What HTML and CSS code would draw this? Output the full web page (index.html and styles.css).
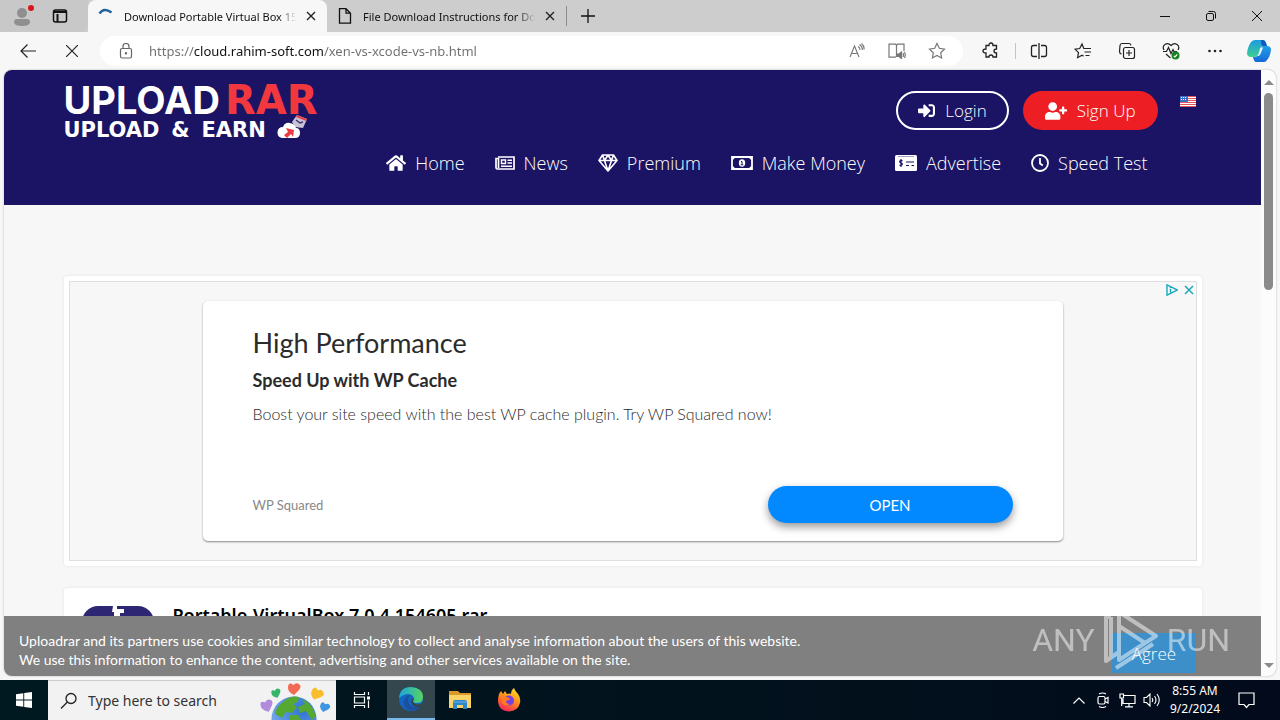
FILE: index.html
```html
<!DOCTYPE html>
<html lang="en">
<head>
<meta charset="utf-8">
<meta name="viewport" content="width=device-width, initial-scale=1">
<title>Download Portable Virtual Box</title>
<link rel="stylesheet" href="styles.css">
</head>
<body>
<header class="tabstrip">
  <div class="tabstrip-start">
    <button class="icon-btn" aria-label="Profile">
      <svg width="24" height="24" viewBox="0 0 24 24"><circle cx="12" cy="9" r="5" fill="#8f8f8f"/><path d="M4 18q0-3 3-3h10q3 0 3 3 0 4-8 4t-8-4z" fill="#8f8f8f"/><circle cx="21" cy="4" r="3" fill="#d8161c"/></svg>
    </button>
    <button class="icon-btn" aria-label="Tab actions">
      <svg width="16" height="16" viewBox="0 0 16 16" fill="none" stroke="#111" stroke-width="1.5"><rect x="1.5" y="2" width="13" height="12" rx="2"/><path d="M2 4h12M5.5 6v8" stroke-width="2"/></svg>
    </button>
  </div>
  <div class="tab tab-active">
    <svg width="16" height="16" viewBox="0 0 16 16" fill="none" stroke="#1f639c" stroke-width="2.500"><path d="M1.500 5.500Q6-1 13.500 4.500"/></svg>
    <span class="tab-title">Download Portable Virtual Box 15</span>
    <button class="tab-close" aria-label="Close tab"><svg width="10" height="10" viewBox="0 0 10 10" stroke="#222" stroke-width="1.400"><path d="M1 1l8 8M9 1L1 9"/></svg></button>
  </div>
  <div class="tab">
    <svg width="16" height="16" viewBox="0 0 16 16" fill="none" stroke="#111" stroke-width="1.300"><path d="M2.500.7h6.500l4.500 4.500v10h-11zM9 .7v4.500h4.500"/></svg>
    <span class="tab-title">File Download Instructions for Dow</span>
    <button class="tab-close" aria-label="Close tab"><svg width="10" height="10" viewBox="0 0 10 10" stroke="#222" stroke-width="1.400"><path d="M1 1l8 8M9 1L1 9"/></svg></button>
  </div>
  <span class="tab-sep"></span>
  <button class="icon-btn new-tab" aria-label="New tab"><svg width="14" height="14" viewBox="0 0 14 14" stroke="#111" stroke-width="1.300"><path d="M7 0v14M0 7h14"/></svg></button>
  <div class="window-controls">
    <button class="icon-btn" aria-label="Minimize"><svg width="10" height="10" viewBox="0 0 10 10" stroke="#111"><path d="M0 5.500h10"/></svg></button>
    <button class="icon-btn" aria-label="Restore"><svg width="10" height="10" viewBox="0 0 10 10" fill="none" stroke="#111"><rect x=".5" y="2.500" width="7" height="7" rx="1.500"/><path d="M2.500.5h5q2 0 2 2v5"/></svg></button>
    <button class="icon-btn" aria-label="Close"><svg width="10" height="10" viewBox="0 0 10 10" stroke="#111"><path d="M0 0l10 10M10 0L0 10"/></svg></button>
  </div>
</header>

<div class="toolbar">
  <button class="icon-btn nav-btn" aria-label="Back"><svg width="16" height="14" viewBox="0 0 16 14" fill="none" stroke="#222" stroke-width="1.200"><path d="M16 7H1M7.500.5L1 7l6.500 6.500"/></svg></button>
  <button class="icon-btn nav-btn" aria-label="Stop"><svg width="12" height="12" viewBox="0 0 12 12" stroke="#222" stroke-width="1.200"><path d="M0 0l12 12M12 0L0 12"/></svg></button>
  <div class="address">
    <svg width="14" height="16" viewBox="0 0 14 16" fill="none" stroke="#666" stroke-width="1.200"><rect x="1.500" y="5.500" width="11" height="9.500" rx="1.500"/><path d="M4 5.500V3.500a3 3 0 0 1 6 0v2"/><circle cx="7" cy="10.300" r=".6" fill="#666"/></svg>
    <input class="url" type="text" aria-label="Address" value="https://cloud.rahim-soft.com/xen-vs-xcode-vs-nb.html">
    <button class="icon-btn addr-btn" aria-label="Read aloud"><svg width="16" height="16" viewBox="0 0 16 16" fill="none" stroke="#777" stroke-width="1.100"><path d="M1 14L5.500 3 10 14M2.500 10.500h6M9 3.500q2 1 2 3.500M10.500 1.500q3 2 3 5.500M12.500.5q3 2.500 2.500 6"/></svg></button>
    <button class="icon-btn addr-btn" aria-label="Immersive reader"><svg width="18" height="16" viewBox="0 0 18 16" fill="none" stroke="#777" stroke-width="1.200"><path d="M8.500 1v13M8.500 2l-1-.8H1v13h7M8.500 2l1-.8H16v7"/><path d="M9 11h2l2.500-2v6.500L11 13.500H9z" fill="#777"/><path d="M15 10q1 2 0 4M16.500 9q1.500 3 0 6"/></svg></button>
    <button class="icon-btn addr-btn" aria-label="Favorite"><svg width="18" height="18" viewBox="0 0 18 18" fill="none" stroke="#777" stroke-width="1.200"><path d="M9 1.500l2.300 4.800 5.200.8-3.800 3.700.9 5.200L9 13.500 4.400 16l.9-5.200L1.500 7.100l5.200-.8z"/></svg></button>
  </div>
  <div class="tools">
    <button class="icon-btn tool" aria-label="Extensions"><svg width="18" height="18" viewBox="0 0 18 18" fill="none" stroke="#222" stroke-width="1.300"><path d="M4 3.500h3q0-2.500 2-2.500t2 2.500h3.500V7q-2.500 0-2.500 2t2.500 2v4H11q0-2-2-2t-2 2H4v-4q-3 0-3-2t3-2z"/></svg></button>
    <span class="tool-sep"></span>
    <button class="icon-btn tool" aria-label="Split screen"><svg width="18" height="18" viewBox="0 0 18 18" fill="none" stroke="#222" stroke-width="1.300"><path d="M7 3.500H3.500q-2 0-2 2v7q0 2 2 2H7M11 3.500h3.500q2 0 2 2v7q0 2-2 2H11M9 1v16"/></svg></button>
    <button class="icon-btn tool" aria-label="Favorites"><svg width="18" height="18" viewBox="0 0 18 18" fill="none" stroke="#222" stroke-width="1.200"><path d="M10 7L8 2 5.700 6.500l-4.700.7 3.500 3.500-.9 5L8 13.300l1.500.8M10 6.500h7M10.500 10h6.500M11.500 13.500h4"/></svg></button>
    <button class="icon-btn tool" aria-label="Collections"><svg width="18" height="18" viewBox="0 0 18 18" fill="none" stroke="#222" stroke-width="1.200"><rect x="5.500" y="5.500" width="11" height="11" rx="2"/><path d="M11 8v6M8 11h6M3.500 12Q1.500 11.500 1.500 9.500l.5-6Q2.200 1.500 4 1.500h7q1.500 0 2 1.800"/></svg></button>
    <button class="icon-btn tool" aria-label="Browser essentials"><svg width="18" height="18" viewBox="0 0 18 18" fill="none" stroke="#222" stroke-width="1.200"><path d="M2 8Q0 4.500 3 2.500t6 1q3-3 6-1T16 8M1 9.500h3.500l2-4 2.500 6 2-4 1 2h3M4 12l4.500 4"/><circle cx="13.500" cy="13.500" r="4" fill="#16831f" stroke="none"/><path d="M11.800 14l1.200 1 2.300-2.600" stroke="#fff"/></svg></button>
    <button class="icon-btn tool" aria-label="Settings and more"><svg width="14" height="4" viewBox="0 0 14 4" fill="#222"><circle cx="1.500" cy="2" r="1.300"/><circle cx="7" cy="2" r="1.300"/><circle cx="12.500" cy="2" r="1.300"/></svg></button>
    <button class="icon-btn tool tool-copilot" aria-label="Copilot"><svg width="24" height="24" viewBox="0 0 24 24"><defs><linearGradient id="cpa" x1="0" y1="0" x2="0" y2="1"><stop offset="0" stop-color="#1a9be0"/><stop offset="1" stop-color="#3fcf93"/></linearGradient><linearGradient id="cpb" x1="0" y1="0" x2="0" y2="1"><stop offset="0" stop-color="#1f9fe8"/><stop offset="1" stop-color="#1769d8"/></linearGradient></defs><path d="M8 1h8q2 0 3 3l1 3h-4q-2 0-3 3l-2 6q-1 2-4 2H4q-4 0-4-4Q1 7 4 3q2-2 4-2z" fill="url(#cpa)"/><path d="M16 7h4q4 0 4 4-1 7-4 10-1 2-3 2H9q-2 0-3-5h2q2 0 3-2l2-6q1-3 3-3z" fill="url(#cpb)"/><path d="M14 1h2q2 0 3 3l1 3h-4q-2 0-2-6z" fill="#1558c0"/><path d="M13.500 8.500H16l-2.500 6.500q-1 2-2.500 2H9.500q1.500 0 2-2z" fill="#e9f7ff"/></svg></button>
  </div>
</div>

<div class="viewport">
  <div class="page">
    <header class="site-header">
      <div class="container">
        <div class="header-top">
          <a class="logo" href="#" aria-label="UploadRAR home">
            <span class="logo-main"><span>UPLOAD</span><span class="logo-rar">RAR</span></span>
            <span class="logo-sub"><span>UPLOAD</span><span>&amp;</span><span>EARN</span>
              <svg width="30" height="24" viewBox="0 3 30 24"><path d="M15 7l5-7 10 4-4 9-8-1z" fill="#c9c3d4"/><path d="M20 0l10 4-1 2-10-4z" fill="#e8434b"/><path d="M19 5l4 3 3-1" fill="none" stroke="#3a3478" stroke-width="1.500"/><path d="M5 23q-5-1-4.500-6T6 12q2-5 7-4t6 5q4 0 4 5t-5 5z" fill="#fff"/><path d="M9 13l8 2-1 7-2-3-4 4-3-3 4-3z" fill="#ec3a42"/></svg>
            </span>
          </a>
          <div class="account">
            <button class="pill pill-outline"><svg width="17" height="17" viewBox="0 0 512 512" fill="currentColor"><path d="M416 448h-84c-6.600 0-12-5.400-12-12v-40c0-6.600 5.400-12 12-12h84c17.700 0 32-14.300 32-32V160c0-17.700-14.300-32-32-32h-84c-6.600 0-12-5.400-12-12V76c0-6.600 5.400-12 12-12h84c53 0 96 43 96 96v192c0 53-43 96-96 96zm-47-201L201 79c-15-15-41-4.500-41 17v96H24c-13.300 0-24 10.700-24 24v96c0 13.300 10.700 24 24 24h136v96c0 21.500 26 32 41 17l168-168c9.300-9.400 9.300-24.600 0-34z"/></svg>Login</button>
            <button class="pill pill-red"><svg width="22" height="18" viewBox="0 0 640 512" fill="currentColor"><path d="M624 208h-64v-64c0-8.800-7.200-16-16-16h-32c-8.800 0-16 7.200-16 16v64h-64c-8.800 0-16 7.200-16 16v32c0 8.800 7.200 16 16 16h64v64c0 8.800 7.200 16 16 16h32c8.800 0 16-7.200 16-16v-64h64c8.800 0 16-7.200 16-16v-32c0-8.800-7.200-16-16-16zm-400 48c70.700 0 128-57.300 128-128S294.700 0 224 0 96 57.300 96 128s57.300 128 128 128zm89.600 32h-16.700c-22.200 10.200-46.900 16-72.900 16s-50.600-5.800-72.900-16h-16.700C60.200 288 0 348.200 0 422.400V464c0 26.500 21.500 48 48 48h352c26.500 0 48-21.500 48-48v-41.600c0-74.200-60.200-134.400-134.400-134.400z"/></svg>Sign Up</button>
            <button class="flag" aria-label="English"><svg width="16" height="11" viewBox="0 0 16 11"><path fill="#fff" d="M0 0h16v11H0z"/><path d="M0 .5h16M0 2.500h16M0 4.500h16M0 6.500h16M0 8.500h16M0 10.500h16" stroke="#e0555c"/><path fill="#3d6fc9" d="M0 0h8v6H0z"/><path d="M1 1.500h6M1 3.500h6" stroke="#fff" stroke-dasharray="1 1"/></svg></button>
          </div>
        </div>
        <nav class="site-nav">
          <a href="#"><svg width="20" height="18" viewBox="0 0 576 512" fill="currentColor"><path d="M280.370 148.260L96 300.110V464a16 16 0 0 0 16 16l112.060-.29a16 16 0 0 0 15.920-16V368a16 16 0 0 1 16-16h64a16 16 0 0 1 16 16v95.640a16 16 0 0 0 16 16.050L464 480a16 16 0 0 0 16-16V300L295.670 148.260a12.190 12.190 0 0 0-15.300 0zM571.600 251.470L488 182.560V44.050a12 12 0 0 0-12-12h-56a12 12 0 0 0-12 12v72.610L318.470 43a48 48 0 0 0-61 0L4.340 251.470a12 12 0 0 0-1.600 16.900l25.500 31A12 12 0 0 0 45.150 301l235.220-193.740a12.190 12.190 0 0 1 15.300 0L530.900 301a12 12 0 0 0 16.900-1.600l25.500-31a12 12 0 0 0-1.700-16.930z"/></svg>Home</a>
          <a href="#"><svg width="20" height="14" viewBox="0 0 20 14" fill="none" stroke="currentColor" stroke-width="1.700"><path d="M3 1h16v12H2.500Q1 13 1 11.500V2.500h2M3.500 2v10"/><path d="M6.500 4h4v3.500h-4zM12.500 4.200H17M12.500 7H17M6 10.200h11" stroke-width="1.400"/></svg>News</a>
          <a href="#"><svg width="20" height="18" viewBox="0 0 20 18" fill="none" stroke="currentColor" stroke-width="1.600" stroke-linejoin="round"><path d="M4.500 1h11L19 6.500 10 17 1 6.500zM1 6.500h18M4.500 1L6.500 6.500 10 17l3.500-10.500 2-5.500M6.500 6.500L10 1l3.500 5.500"/></svg>Premium</a>
          <a href="#"><svg width="22" height="14" viewBox="0 0 22 14" fill="none" stroke="currentColor" stroke-width="1.800"><path d="M1 1h20v12H1z"/><path d="M1 3q2 0 2-2M19 1q0 2 2 2M1 11q2 0 2 2M19 13q0-2 2-2" stroke-width="1.400"/><ellipse cx="11" cy="7" rx="3.200" ry="3.700" fill="currentColor" stroke="none"/><path d="M10 5.500h1v3M9.700 8.800h2.600" stroke="#1b1464" stroke-width="1"/></svg>Make Money</a>
          <a href="#"><svg width="22" height="17" viewBox="0 0 22 17"><rect y="0" width="22" height="16" rx="1.500" fill="currentColor"/><path d="M11 7h8M11 10.500h3M16.500 10.500H19M7.500 5.700H5.800q-1.400.2-1 1.500l2.300 1.300q.5 1.700-1 1.900H4.500M6 4v8" fill="none" stroke="#1b1464" stroke-width="1.200"/><path d="M3 1.500h16" stroke="#1b1464" stroke-width=".4"/></svg>Advertise</a>
          <a href="#"><svg width="18" height="18" viewBox="0 0 18 18" fill="none" stroke="currentColor" stroke-width="1.800"><circle cx="9" cy="9" r="8"/><path d="M9 4v5.500l2.800 2"/></svg>Speed Test</a>
        </nav>
      </div>
    </header>

    <main class="container content">
      <section class="panel ad-panel">
        <div class="ad-frame">
          <div class="ad-choices">
            <a href="#" aria-label="AdChoices"><svg width="12" height="12" viewBox="0 0 12 12" fill="none" stroke="#1aa9bc" stroke-width="1.400"><path d="M1 .8L11.500 6 1 11.200zM4.500 5v3.500M4.500 3.200v1"/></svg></a>
            <button aria-label="Close ad"><svg width="10" height="10" viewBox="0 0 10 10" stroke="#1aa9bc" stroke-width="1.500"><path d="M1 1l8 8M9 1L1 9"/></svg></button>
          </div>
          <article class="ad-card">
            <h2>High Performance</h2>
            <h3>Speed Up with WP Cache</h3>
            <p>Boost your site speed with the best WP cache plugin. Try WP Squared now!</p>
            <div class="ad-foot"><span>WP Squared</span><button class="ad-open">OPEN</button></div>
          </article>
        </div>
      </section>
      <section class="panel file-panel">
        <svg width="72" height="72" viewBox="0 0 72 72"><rect width="72" height="72" rx="16" fill="#2d2673"/><path d="M31 0h4v3h7v4h-4v6h-6V6h-2z" fill="#fff"/></svg>
        <h1>Portable-VirtualBox 7.0.4.154605.rar</h1>
      </section>
    </main>

    <div class="cookie-bar">
      <p>Uploadrar and its partners use cookies and similar technology to collect and analyse information about the users of this website.<br>We use this information to enhance the content, advertising and other services available on the site.</p>
      <button class="agree">Agree</button>
    </div>
    <div class="watermark" aria-hidden="true">
      <span>ANY</span>
      <svg width="56" height="64" viewBox="0 0 56 64" fill="none" stroke="#fff" stroke-width="4" stroke-linejoin="round"><path d="M8 9H3v44l13-9V4L53 28 42 35 16 18M16 44v8l26-17M16 18l0 26M13 60l37-24M8 9v40"/></svg>
      <span>RUN</span>
    </div>
  </div>
  <div class="scrollbar" aria-hidden="true"><span class="arrow-up"></span><span class="thumb"></span><span class="arrow-down"></span></div>
</div>

<footer class="taskbar">
  <button class="task start" aria-label="Start"><svg width="16" height="16" viewBox="0 0 16 16" fill="#fff"><path d="M0 2.200L7.300 1.200V7.500H0zM8.200 1.100L16 0V7.500H8.200zM0 8.400h7.300v6.400L0 13.800zM8.200 8.400H16V16l-7.800-1.100z"/></svg></button>
  <label class="search">
    <svg width="18" height="18" viewBox="0 0 18 18" fill="none" stroke="#222" stroke-width="1.300"><circle cx="11" cy="6.500" r="5"/><path d="M7.400 10L1 16.500"/></svg>
    <input type="text" aria-label="Search" placeholder="Type here to search">
    <svg class="globe" width="72" height="38" viewBox="0 0 72 38"><defs><radialGradient id="gl" cx=".7" cy=".3" r=".8"><stop offset="0" stop-color="#2f74d0"/><stop offset="1" stop-color="#78a9ef"/></radialGradient><path id="h" d="M0 3Q0-2 3-1.500L5.500 0Q8-3 11-1T11 5L6 10Q0 7 0 3z"/></defs><circle cx="35" cy="37" r="22.500" fill="url(#gl)"/><path d="M24 20q8-7 16-5l-1 5-5 2 4 3-5 6-6-1-4 6-7-4q1-7 8-12zM43 17q10 4 14 17l-4 4-6-9-6 2-2-6 7-3zM31 33l8 0 3 5H30z" fill="#55a830"/><use href="#h" transform="translate(29 3)" fill="#f26a55"/><use href="#h" transform="translate(12 10) scale(.75) rotate(-18)" fill="#34b56a"/><use href="#h" transform="translate(54 6) rotate(26)" fill="#f7bd2d"/><use href="#h" transform="translate(1 22) rotate(-18)" fill="#b28bdc"/><use href="#h" transform="translate(62 21) scale(.8) rotate(18)" fill="#3e95e0"/></svg>
  </label>
  <button class="task task-view" aria-label="Task view"><svg width="18" height="16" viewBox="0 0 18 16" fill="none" stroke="#fff" stroke-width="1.200"><path d="M1.500 0v2.500h10V0M1.500 5h10v6h-10zM1.500 16v-2.500h10V16M15.500 0v3M15.500 8.500V16"/><path d="M14 4.500h3v3h-3z" fill="#fff" stroke="none"/></svg></button>
  <button class="task task-active" aria-label="Microsoft Edge"><svg width="24" height="24" viewBox="0 0 24 24"><defs><linearGradient id="ea" x1="0" y1="0" x2="1" y2="0"><stop offset="0" stop-color="#1ca4df"/><stop offset="1" stop-color="#57d45e"/></linearGradient></defs><circle cx="12" cy="12" r="12" fill="#1266bf"/><path d="M0 11Q1 0 12 0q12 1 12 10 0 6-6 6-4 0-4-2 2-2 0-5Q9 4 0 11z" fill="url(#ea)"/><path d="M9 12q0 8 8 8 3 0 5-1-5 6-12 4Q4 20 5 14q1-5 6-6-2 2-2 4z" fill="#1b4fa0"/><path d="M14 14q0 3 5 3.500 3 0 5-2v2l-2 2.500q-9 1-10-5 0-3 2-4 1 1 0 3z" fill="#34474f"/></svg></button>
  <button class="task" aria-label="File Explorer"><svg width="22" height="20" viewBox="0 0 22 20"><path d="M0 1h9l2 2h11v15H0z" fill="#d79a2b"/><path d="M0 5h22v13H0z" fill="#fbd468"/><path d="M4 19v-7q0-2 2-2h10q2 0 2 2v7h-4v-4H8v4z" fill="#2f86c8"/><path d="M4 12h14" stroke="#69b3e8"/></svg></button>
  <button class="task" aria-label="Firefox"><svg width="24" height="24" viewBox="0 0 24 24"><defs><linearGradient id="ff" x1=".8" y1="0" x2=".3" y2="1"><stop offset="0" stop-color="#ffe226"/><stop offset=".5" stop-color="#ff8a1c"/><stop offset="1" stop-color="#f5225f"/></linearGradient></defs><path d="M2 6l2-3 2 3 2-3 2 3q3-1 4 0 0-4 3-6 1 3 4 6 3 4 2 9-2 8-11 8.500Q2 23 1 14q0-5 1-8z" fill="url(#ff)"/><circle cx="12" cy="12.500" r="5" fill="#7a3fe0"/><path d="M5 10q4-2 7 0 2 1 0 2l-3 1q0 3 4 3-5 3-8-1z" fill="#ff7b22"/></svg></button>
  <div class="tray">
    <span class="tray-icon"><svg width="12" height="7" viewBox="0 0 12 7" fill="none" stroke="#fff" stroke-width="1.200"><path d="M.5 6.500l5.500-5.500 5.500 5.500"/></svg></span>
    <span class="tray-icon"><svg width="12" height="16" viewBox="0 0 12 16" fill="none" stroke="#fff" stroke-width="1.200"><rect x="1" y="4.500" width="7" height="7.500" rx="1.500"/><path d="M8 7l3-1.500V11L8 9.500M2 2q3.500-2 7 0M2 14.500q3.500 2 7 0"/></svg></span>
    <span class="tray-icon"><svg width="17" height="15" viewBox="0 0 17 15" fill="none" stroke="#fff" stroke-width="1.200"><path d="M5 2.500h11v8H4V6M10 10.500v3M6 13.800h8M1 1h3.500v4H1zM2.700 5v8"/></svg></span>
    <span class="tray-icon"><svg width="17" height="14" viewBox="0 0 17 14" fill="none" stroke="#fff" stroke-width="1.100"><path d="M1 4.500h2.500L7 1v12L3.500 9.500H1zM9 5q1.500 2 0 4M11.500 3q3 4 0 8M14 1q4.500 6 0 12"/></svg></span>
    <div class="clock"><span>8:55 AM</span><span>9/2/2024</span></div>
    <svg width="17" height="17" viewBox="0 0 17 17" fill="none" stroke="#fff" stroke-width="1.200"><path d="M1 1h15v11.500h-5l-2.500 3-2.500-3H1z"/></svg>
  </div>
</footer>
</body>
</html>
```

FILE: styles.css
```css
* { box-sizing: border-box; }
body {
  margin: 0;
  height: 100vh;
  display: flex;
  flex-direction: column;
  overflow: hidden;
  background: #f7f7f7;
  font-family: "Noto Sans", sans-serif;
  color: #111;
}
h1, h2, h3, p { margin: 0; }
button, input { font: inherit; color: inherit; }
button { background: none; border: 0; padding: 0; cursor: pointer; }
svg { flex: none; display: block; }
a { color: inherit; text-decoration: none; }
.icon-btn { display: flex; align-items: center; justify-content: center; }

/* Tab strip */
.tabstrip { flex: none; height: 32px; display: flex; align-items: stretch; background: #cdcdcd; }
.tabstrip-start { width: 88px; display: flex; align-items: center; gap: 18px; padding-left: 10px; background: #c8c8c8; border-bottom-right-radius: 8px; }
.tab { width: 239px; display: flex; align-items: center; gap: 10px; padding: 0 11px 0 10px; font-size: 11px; }
.tab-active { background: #f7f7f7; border-radius: 8px 8px 0 0; }
.tab-title { flex: 1; overflow: hidden; white-space: nowrap; mask-image: linear-gradient(to right, #000 90%, transparent); }
.tab-close { width: 10px; }
.tab-sep { width: 1px; margin: 6px 0; background: #8c8c8c; }
.new-tab { width: 42px; }
.window-controls { margin-left: auto; display: flex; }
.window-controls .icon-btn { width: 46px; }

/* Toolbar */
.toolbar { flex: none; height: 38px; display: flex; align-items: center; padding-left: 6px; background: #f7f7f7; }
.nav-btn { width: 44px; height: 30px; }
.address { flex: 1; height: 30px; margin: 0 6px; display: flex; align-items: center; gap: 15px; padding: 0 14px 0 19px; border-radius: 15px; background: #fff; }
.url {
  flex: 1;
  min-width: 0;
  border: 0;
  padding: 0 0 0 1px;
  outline: 0;
  font-size: 13px;
  color: transparent;
  background: linear-gradient(to right, #6f6f6f 46px, #111 46px, #111 175px, #6f6f6f 175px);
  background-clip: text;
  -webkit-background-clip: text;
}
.addr-btn { width: 25px; }
.tools { display: flex; align-items: center; }
.tool { width: 44px; height: 30px; }
.tool-copilot { width: 43px; }
.tool-sep { width: 1px; height: 16px; margin: 0 1px 0 2px; background: #c4c4c4; }

/* Web page viewport */
.viewport { flex: 1; min-height: 0; margin: 0 4px 4px; display: flex; border-radius: 8px; overflow: hidden; background: #fcfcfc; box-shadow: 0 0 2px #aaa; }
.page { flex: 1; min-width: 0; position: relative; overflow: hidden; background: #f7f7f7; font-family: "Open Sans", sans-serif; }
.scrollbar { width: 15px; display: flex; flex-direction: column; align-items: center; padding: 10px 0 8px; }
.thumb { width: 9px; height: 197px; margin: 8px 0 auto; border-radius: 5px; background: #8b8b8b; }
.arrow-up, .arrow-down { border: 5px solid transparent; border-top: 0; border-bottom: 5px solid #8b8b8b; }
.arrow-down { border-bottom: 0; border-top: 5px solid #8b8b8b; }
.container { max-width: 1138px; margin: 0 auto; }

/* Site header */
.site-header { background: #1b1464; color: #fff; padding: 14px 0 30px; }
.header-top { display: flex; justify-content: space-between; align-items: flex-start; height: 62px; }
.logo { width: 254px; display: block; font-weight: 700; }
.logo-main { display: flex; justify-content: space-between; font-family: Inter, sans-serif; font-size: 38px; line-height: 32px; }
.logo-rar { color: #f2383f; font-family: "DejaVu Sans", sans-serif; font-size: 40px; }
.logo-sub { display: flex; justify-content: space-between; align-items: center; margin: 2px 10px 0 0; font-family: "DejaVu Sans", sans-serif; font-size: 21px; line-height: 24px; }
.logo-sub svg { overflow: visible; }
.account { display: flex; align-items: flex-start; gap: 14px; padding: 7px 6px 0 0; font-size: 17px; font-weight: 300; }
.pill { height: 39px; display: flex; align-items: center; gap: 10px; padding: 0 22px; border-radius: 20px; }
.pill-outline { border: 2px solid #fff; padding: 0 20px; }
.pill-red { background: #ed1f24; }
.flag { margin: 5px 0 0 8px; }
.site-nav { display: flex; justify-content: flex-end; gap: 30px; padding: 5px 54px 0 0; font-size: 18px; font-weight: 300; line-height: 24px; }
.site-nav a { display: flex; align-items: center; gap: 9px; }

/* Content */
.content { padding-top: 71px; }
.panel { background: #fff; box-shadow: 0 0 3px #e0e0e0; border-radius: 3px; }
.ad-panel { padding: 5px; margin-bottom: 22px; }
.ad-frame { position: relative; border: 1px solid #dedede; background: #f7f7f7; padding: 19px 133px; }
.ad-choices { position: absolute; top: 2px; right: 2px; display: flex; align-items: center; gap: 6px; }
.ad-card { height: 240px; display: flex; flex-direction: column; padding: 26px 50px 18px; background: #fff; border-radius: 5px; box-shadow: 0 1px 2px rgba(0, 0, 0, .45); font-family: Lato, sans-serif; color: #2b2b2b; }
.ad-card h2 { font-size: 27px; line-height: 32px; font-weight: 400; }
.ad-card h3 { margin-top: 10px; font-size: 18px; line-height: 22px; font-weight: 700; }
.ad-card p { margin-top: 13px; font-size: 16px; font-weight: 300; line-height: 20px; }
.ad-foot { margin-top: auto; display: flex; justify-content: space-between; align-items: center; font-size: 13px; color: #888; }
.ad-open { width: 245px; height: 37px; border-radius: 19px; background: #0389ff; color: #fff; font-size: 15px; box-shadow: 0 4px 8px rgba(0, 0, 0, .4); }
.file-panel { display: flex; gap: 19px; padding: 18px; }
.file-panel h1 { font-family: "Noto Sans", sans-serif; font-size: 18px; line-height: 18px; font-weight: 600; color: #000; }

/* Cookie notice */
.cookie-bar { position: absolute; left: 0; right: 0; bottom: 0; height: 60px; display: flex; align-items: flex-start; justify-content: space-between; padding: 15px 65px 0 15px; background: #808080; color: #fff; font-family: Lato, sans-serif; font-size: 14px; line-height: 19px; }
.agree { width: 84px; height: 40px; margin-top: 2px; background: #3c8fc9; font-family: "Open Sans", sans-serif; font-size: 17px; font-weight: 300; }
.watermark { position: absolute; right: 31px; bottom: 4px; display: flex; align-items: center; gap: 8px; color: #fff; opacity: .5; font-family: Roboto, sans-serif; font-size: 32px; line-height: 64px; }

/* Taskbar */
.taskbar { flex: none; height: 40px; display: flex; background: linear-gradient(to right, #001820, #02101c 70%, #020a1c); color: #fff; }
.task { width: 49px; display: flex; align-items: center; justify-content: center; }
.start { width: 48px; }
.task-view { width: 51px; }
.task-active { width: 48px; background: #34474f; border-bottom: 2px solid #76b9ed; }
.search { width: 288px; display: flex; align-items: center; gap: 10px; padding: 0 5px 0 12px; background: #f2f2f2; border-top: 1px solid #ccc; }
.search input { flex: 1; min-width: 0; border: 0; padding: 0; background: none; outline: 0; font-size: 14px; color: #222; }
.search input::placeholder { color: #333; opacity: 1; }
.globe { align-self: flex-end; }
.tray { margin-left: auto; display: flex; align-items: center; padding-right: 25px; }
.tray-icon { width: 24px; display: flex; justify-content: center; }
.clock { width: 52px; margin: 0 17px 0 6px; display: flex; flex-direction: column; align-items: center; font-size: 12px; line-height: 18px; }
```
